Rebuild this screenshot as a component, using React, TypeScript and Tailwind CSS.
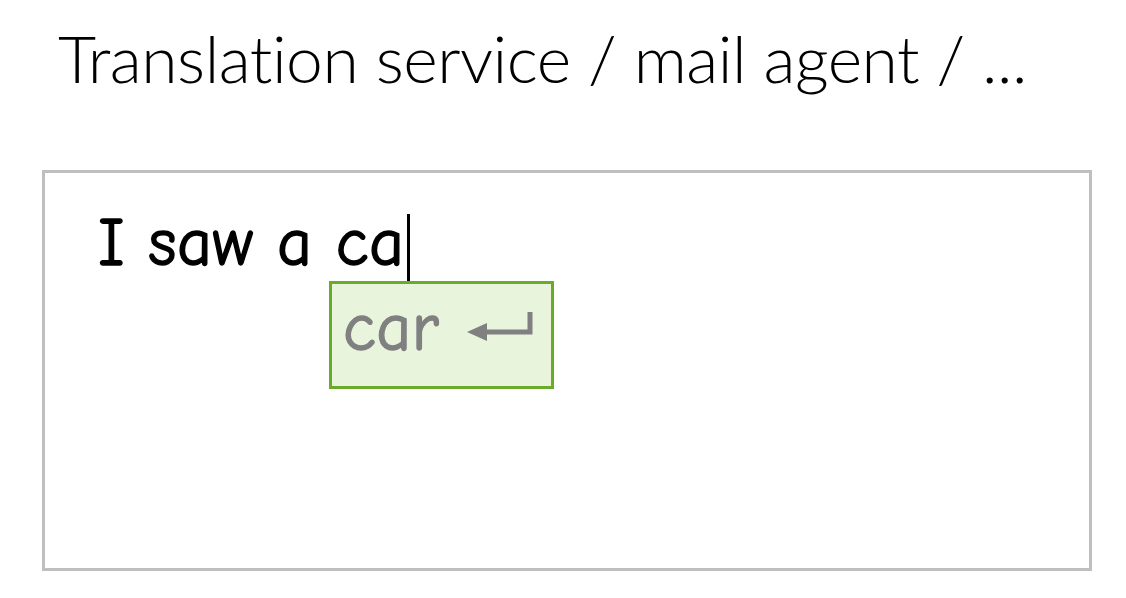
export default function App() {
  return (
    <div className="w-[1126px] h-[598px] bg-white overflow-hidden">
      <h1 className="pl-[58px] pt-[18px] text-[66px] leading-[80px] font-light text-black [font-family:Lato,'Open_Sans',sans-serif] tracking-[-0.5px]">
        Translation service / mail agent / ...
      </h1>
      <div className="ml-[42px] mt-[72px] w-[1050px] h-[401px] border-[3px] border-[#bfbfbf]">
        <div className="relative pl-[53px] pt-[34px] flex items-end">
          <span className="text-[68px] leading-[72px] tracking-[0.5px] text-black [-webkit-text-stroke:1.4px_currentColor] [font-family:'Comic_Sans_MS','Comic_Neue',cursive]">
            I saw a ca
          </span>
          <span className="ml-[2px] w-[3px] h-[71px] bg-black mb-[-6px]" />
          <div className="absolute left-[284px] top-[108px] w-[225px] h-[108px] border-[3px] border-[#6aab2b] bg-[#e8f5dc] flex items-center pl-[11px] gap-[28px]">
            <span className="text-[68px] leading-[72px] tracking-[0.5px] text-[#808080] mt-[-14px] [-webkit-text-stroke:1.4px_currentColor] [font-family:'Comic_Sans_MS','Comic_Neue',cursive]">
              car
            </span>
            <svg width="66" height="32" viewBox="0 0 66 32" className="mt-[-18px]">
              <path d="M63 2 V22 H18" fill="none" stroke="#808080" strokeWidth="5" />
              <path d="M0 22 L20 13 L20 31 Z" fill="#808080" />
            </svg>
          </div>
        </div>
      </div>
    </div>
  );
}
